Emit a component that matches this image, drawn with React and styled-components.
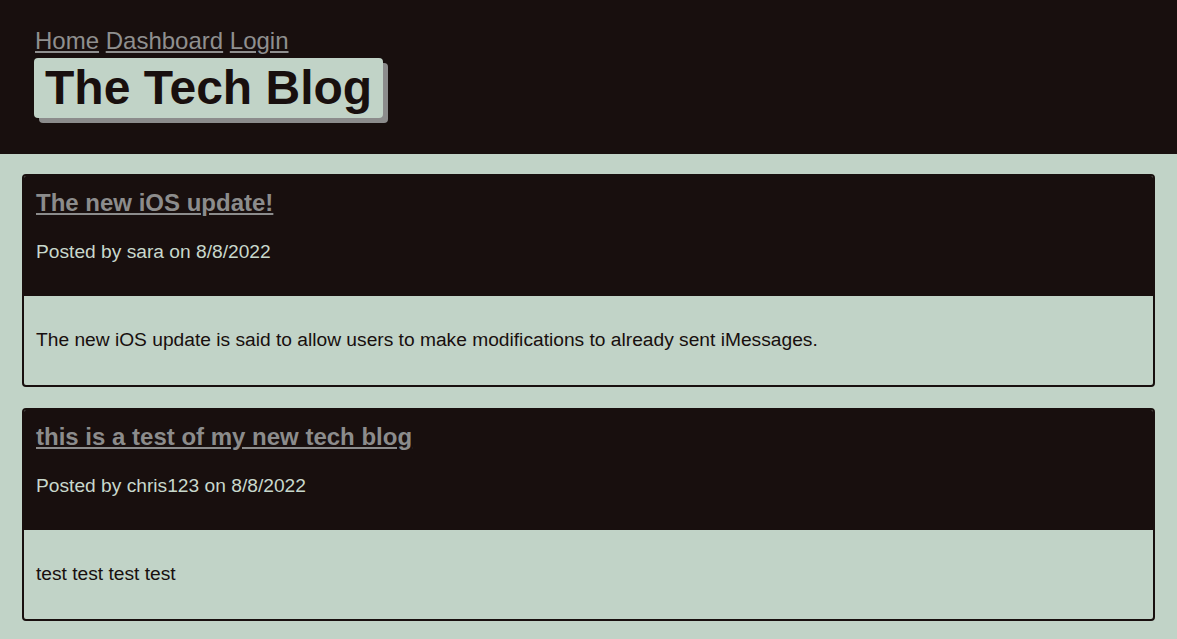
import React from "react";
import styled, { createGlobalStyle } from "styled-components";

const GlobalStyle = createGlobalStyle`
  body {
    margin: 0;
    background: #c1d3c7;
    font-family: "Liberation Sans", Arial, sans-serif;
  }
`;

const Header = styled.header`
  background: #180f0e;
  padding: 27px 34px 36px;
  height: 154px;
  box-sizing: border-box;
`;

const Nav = styled.nav`
  font-size: 24px;
  line-height: 27px;
  margin-left: 1px;
`;

const NavLink = styled.a`
  color: #8f8f8f;
  text-decoration: underline;
  cursor: pointer;
`;

const Title = styled.h1`
  display: inline-block;
  margin: 4px 0 0;
  padding: 2px 11px 3px;
  background: #c1d3c7;
  color: #180f0e;
  font-size: 48px;
  line-height: 55px;
  font-weight: 700;
  border-radius: 4px;
  box-shadow: 5px 5px 0 #8c8c8c;
`;

const Main = styled.main`
  padding: 20px 22px;
  display: flex;
  flex-direction: column;
  gap: 21px;
`;

const Card = styled.article`
  border: 2px solid #180f0e;
  border-radius: 4px;
  overflow: hidden;
`;

const CardHead = styled.div`
  background: #180f0e;
  padding: 13px 12px 33px;
`;

const PostTitle = styled.a`
  display: block;
  color: #8c8c8c;
  font-size: 24px;
  line-height: 27px;
  font-weight: 700;
  text-decoration: underline;
  cursor: pointer;
`;

const Meta = styled.p`
  margin: 25px 0 0;
  color: #c8d8cc;
  font-size: 19.2px;
  line-height: 22px;
`;

const CardBody = styled.div`
  padding: 33px 12px 34px;
  color: #180f0e;
  font-size: 19.2px;
  line-height: 22px;
`;

const posts = [
  {
    title: "The new iOS update!",
    author: "sara",
    date: "8/8/2022",
    body: "The new iOS update is said to allow users to make modifications to already sent iMessages.",
  },
  {
    title: "this is a test of my new tech blog",
    author: "chris123",
    date: "8/8/2022",
    body: "test test test test",
  },
];

export default function App() {
  return (
    <>
      <GlobalStyle />
      <Header>
        <Nav>
          <NavLink>Home</NavLink> <NavLink>Dashboard</NavLink>{" "}
          <NavLink>Login</NavLink>
        </Nav>
        <Title>The Tech Blog</Title>
      </Header>
      <Main>
        {posts.map((p) => (
          <Card key={p.title}>
            <CardHead>
              <PostTitle>{p.title}</PostTitle>
              <Meta>
                Posted by {p.author} on {p.date}
              </Meta>
            </CardHead>
            <CardBody>{p.body}</CardBody>
          </Card>
        ))}
      </Main>
    </>
  );
}
